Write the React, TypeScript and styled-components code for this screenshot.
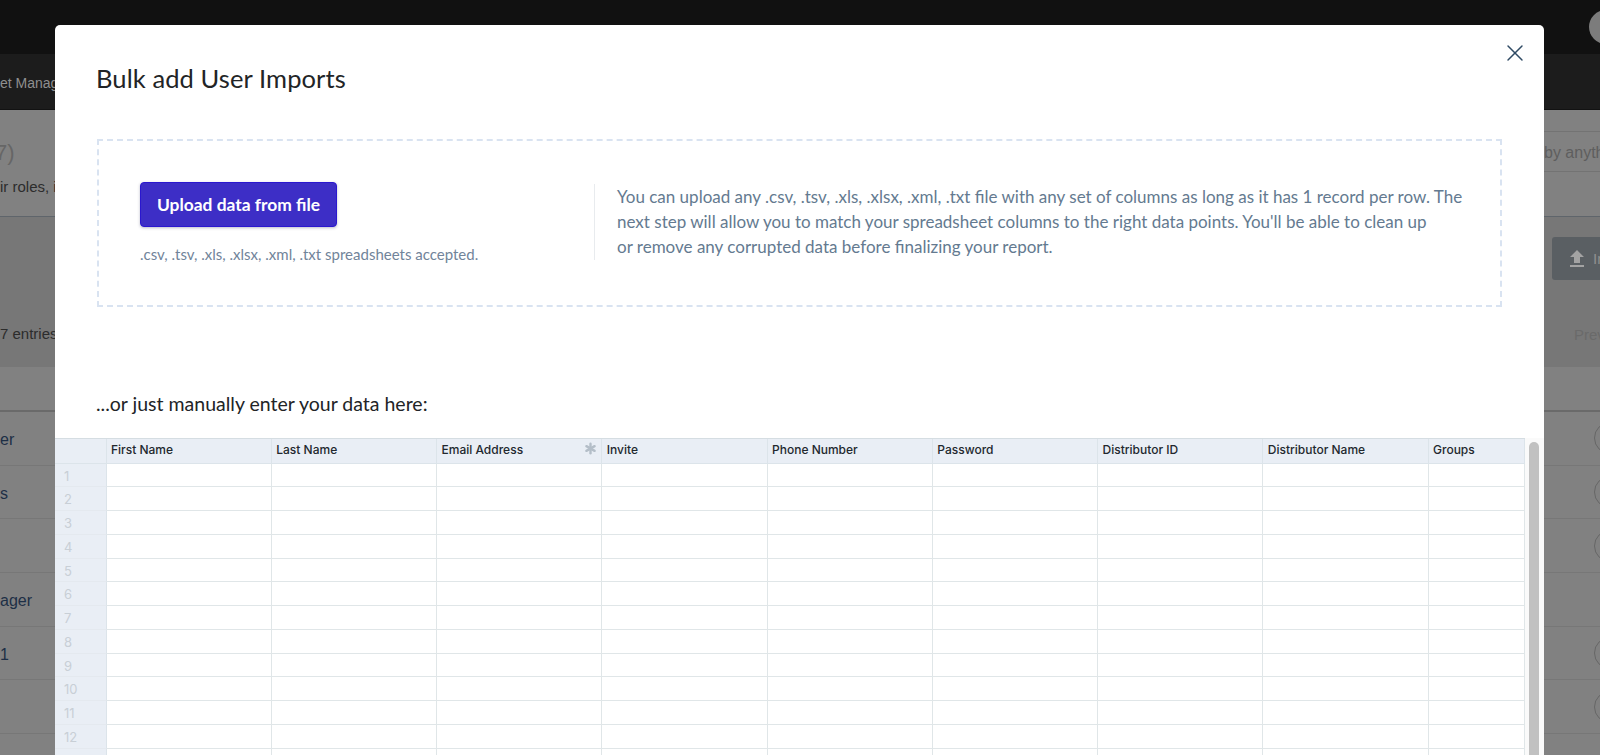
import React from "react";
import styled, { createGlobalStyle } from "styled-components";
import { Asterisk, X } from "lucide-react";

const Global = createGlobalStyle`
  html, body { margin: 0; padding: 0; height: 100%; overflow: hidden; background: #808080; }
  * { box-sizing: border-box; }
`;

const Page = styled.div`
  position: relative;
  width: 1600px;
  height: 755px;
  overflow: hidden;
  font-family: "Liberation Sans", Arial, sans-serif;
  background: #818181;
`;

const TopBar = styled.div`
  height: 54px;
  background: #111111;
  display: flex;
  justify-content: flex-end;
  align-items: center;
`;

const Avatar = styled.div`
  width: 34px;
  height: 34px;
  border-radius: 50%;
  background: #7c7c7c;
  margin-right: -23px;
`;

const SubNav = styled.div`
  height: 56px;
  background: #1c1c1c;
  color: #8f8f8f;
  font-size: 14px;
  line-height: 58px;
  white-space: nowrap;
  border-bottom: 1px solid #121212;
`;

const HeadSection = styled.div`
  height: 107px;
  display: flex;
  justify-content: space-between;
  border-bottom: 1px solid #5f656b;
`;

const HeadLeft = styled.div`
  padding-top: 31px;
`;

const Count = styled.div`
  margin-left: -5px;
  font-size: 22px;
  line-height: 24px;
  color: #666666;
`;

const Lead = styled.div`
  margin-top: 12px;
  font-size: 15px;
  line-height: 20px;
  color: #2c2c2c;
  white-space: nowrap;
`;

const SearchBox = styled.div`
  width: 100px;
  height: 41px;
  margin-top: 21px;
  padding-left: 44px;
  border-top: 1px solid #737373;
  border-bottom: 1px solid #737373;
  font-size: 16px;
  line-height: 41px;
  color: #5e5e5e;
  white-space: nowrap;
  overflow: hidden;
`;

const ActionRow = styled.div`
  height: 150px;
  display: flex;
  justify-content: space-between;
  background: #777777;
`;

const Entries = styled.div`
  align-self: flex-end;
  padding-bottom: 23px;
  font-size: 15px;
  line-height: 20px;
  color: #2c2c2c;
  white-space: nowrap;
`;

const ActionRight = styled.div`
  width: 48px;
  display: flex;
  flex-direction: column;
  justify-content: space-between;
  padding-top: 20px;
  padding-bottom: 22px;
`;

const ImportButton = styled.div`
  height: 43px;
  border-radius: 3px 0 0 3px;
  background: #5a5f63;
  color: #8f8f8f;
  display: flex;
  align-items: center;
  gap: 4px;
  padding-left: 13px;
  font-size: 15px;
  white-space: nowrap;
  overflow: hidden;
`;

const ImportIcon = styled.svg`
  flex: none;
  width: 24px;
  height: 24px;
  fill: #a3a3a3;
`;

const Prev = styled.div`
  font-size: 15px;
  line-height: 20px;
  color: #6a6a6a;
  padding-left: 22px;
  white-space: nowrap;
`;

const ColumnHead = styled.div`
  height: 45px;
  border-bottom: 2px solid #6a6a6a;
`;

const BgRow = styled.div`
  height: 53.7px;
  display: flex;
  justify-content: space-between;
  align-items: center;
  border-bottom: 1px solid #777777;
`;

const BgName = styled.div`
  padding-top: 4px;
  font-size: 16px;
  color: #1d2f46;
  white-space: nowrap;
`;

const RowCircle = styled.div<{ $hidden?: boolean }>`
  width: 32px;
  height: 32px;
  border: 1px solid #666666;
  border-radius: 50%;
  margin-right: -26px;
  visibility: ${(p) => (p.$hidden ? "hidden" : "visible")};
`;

const Modal = styled.div`
  position: absolute;
  left: 55px;
  top: 25px;
  width: 1489px;
  height: 760px;
  background: #ffffff;
  border-radius: 5px 5px 0 0;
  overflow: hidden;
`;

const Close = styled.button`
  position: absolute;
  right: 15px;
  top: 14px;
  width: 28px;
  height: 28px;
  padding: 0;
  border: 0;
  background: none;
  color: #2f4a64;
  display: flex;
  align-items: center;
  justify-content: center;
`;

const Title = styled.h2`
  margin: 0;
  padding: 37px 0 0 41px;
  font-family: "Lato", sans-serif;
  font-size: 25.5px;
  letter-spacing: 0.1px;
  line-height: 32px;
  font-weight: 400;
  color: #222426;
`;

const DropZone = styled.div`
  margin: 45px 42px 0 42px;
  height: 168px;
  border: 2px dashed #d9e3f1;
  display: flex;
  align-items: center;
`;

const UploadSide = styled.div`
  width: 495px;
  margin-top: -1px;
  padding-left: 41px;
  height: 74px;
  display: flex;
  flex-direction: column;
  align-items: flex-start;
`;

const UploadButton = styled.button`
  width: 197px;
  height: 45px;
  flex: none;
  margin-top: -4px;
  border: 1px solid #2a17cf;
  border-radius: 4px;
  background: #3d2ec6;
  box-shadow: 0 1px 3px rgba(30, 30, 80, 0.3);
  color: #ffffff;
  font-family: "Lato", sans-serif;
  font-size: 17.4px;
  font-weight: 700;
  padding: 0;
`;

const Accepted = styled.div`
  margin-top: 18px;
  font-family: "Lato", sans-serif;
  font-size: 15px;
  line-height: 18px;
  color: #71849a;
  white-space: nowrap;
`;

const Explain = styled.p`
  margin: -2px 0 0 0;
  padding: 0 0 0 22px;
  height: 76px;
  border-left: 1px solid #e8ebee;
  font-family: "Lato", sans-serif;
  font-size: 17px;
  line-height: 25px;
  color: #647a90;
  white-space: nowrap;
`;

const ManualLabel = styled.div`
  margin-top: 85px;
  padding-left: 41px;
  font-family: "Lato", sans-serif;
  font-size: 19.5px;
  line-height: 24px;
  color: #222426;
`;

const SheetArea = styled.div`
  margin-top: 22px;
  display: flex;
`;

const Sheet = styled.div`
  width: 1470px;
  display: grid;
  grid-template-columns: 51.5px repeat(8, 165.25px) 96.5px;
  grid-template-rows: 24.5px;
  grid-auto-rows: 23.75px;
  border-top: 1px solid #d5dde2;
  font-family: "Inter", sans-serif;
`;

const HeadCell = styled.div`
  background: #e9eef5;
  border-right: 1px solid #dce4ea;
  border-bottom: 1px solid #dce4ea;
  padding: 0 3.5px 2px 4.5px;
  font-size: 12px;
  font-weight: 500;
  color: #22282e;
  white-space: nowrap;
  display: flex;
  justify-content: space-between;
  align-items: center;
`;

const RowIndex = styled.div`
  background: #e9eef5;
  border-right: 1px solid #dce4ea;
  border-bottom: 1px solid #e4e9ef;
  padding-left: 9px;
  font-size: 13px;
  line-height: 24px;
  color: #c8cfd6;
`;

const Cell = styled.div`
  background: #ffffff;
  border-right: 1px solid #e0e6e8;
  border-bottom: 1px solid #e0e6e8;
`;

const ScrollTrack = styled.div`
  width: 19px;
  background: #fafafa;
  padding: 4px 4px 0 4px;
`;

const ScrollThumb = styled.div`
  width: 10px;
  height: 400px;
  border-radius: 5px;
  background: #c1c1c1;
`;

const Required = styled(Asterisk)`
  color: #b4bec8;
  flex: none;
  margin: -2px -2px 0 0;
`;

const columns = [
  "First Name",
  "Last Name",
  "Email Address",
  "Invite",
  "Phone Number",
  "Password",
  "Distributor ID",
  "Distributor Name",
  "Groups",
];

const bgRows = [
  { name: "er", circle: true },
  { name: "s", circle: true },
  { name: "", circle: true },
  { name: "ager", circle: false },
  { name: "1", circle: true },
  { name: "", circle: true },
];

export default function App() {
  return (
    <Page>
      <Global />
      <TopBar>
        <Avatar />
      </TopBar>
      <SubNav>et Manag</SubNav>
      <HeadSection>
        <HeadLeft>
          <Count>7)</Count>
          <Lead>ir roles, i</Lead>
        </HeadLeft>
        <SearchBox>by anything</SearchBox>
      </HeadSection>
      <ActionRow>
        <Entries>7 entries</Entries>
        <ActionRight>
          <ImportButton>
            <ImportIcon viewBox="0 0 24 24">
              <path d="M9 16h6v-6h4l-7-7-7 7h4zm-4 2h14v2H5z" />
            </ImportIcon>
            Import
          </ImportButton>
          <Prev>Previous</Prev>
        </ActionRight>
      </ActionRow>
      <ColumnHead />
      {bgRows.map((r, i) => (
        <BgRow key={i}>
          <BgName>{r.name}</BgName>
          <RowCircle $hidden={!r.circle} />
        </BgRow>
      ))}
      <Modal>
        <Close aria-label="Close">
          <X size={28} strokeWidth={1.25} />
        </Close>
        <Title>Bulk add User Imports</Title>
        <DropZone>
          <UploadSide>
            <UploadButton>Upload data from file</UploadButton>
            <Accepted>.csv, .tsv, .xls, .xlsx, .xml, .txt spreadsheets accepted.</Accepted>
          </UploadSide>
          <Explain>
            You can upload any .csv, .tsv, .xls, .xlsx, .xml, .txt file with any set of columns as long as it has 1 record per row. The
            <br />
            next step will allow you to match your spreadsheet columns to the right data points. You'll be able to clean up
            <br />
            or remove any corrupted data before finalizing your report.
          </Explain>
        </DropZone>
        <ManualLabel>...or just manually enter your data here:</ManualLabel>
        <SheetArea>
          <Sheet>
            <HeadCell />
            {columns.map((c) => (
              <HeadCell key={c}>
                {c}
                {c === "Email Address" && <Required size={19} strokeWidth={3} />}
              </HeadCell>
            ))}
            {Array.from({ length: 13 }, (_, r) => (
              <React.Fragment key={r}>
                <RowIndex>{r + 1}</RowIndex>
                {columns.map((c) => (
                  <Cell key={c} />
                ))}
              </React.Fragment>
            ))}
          </Sheet>
          <ScrollTrack>
            <ScrollThumb />
          </ScrollTrack>
        </SheetArea>
      </Modal>
    </Page>
  );
}
